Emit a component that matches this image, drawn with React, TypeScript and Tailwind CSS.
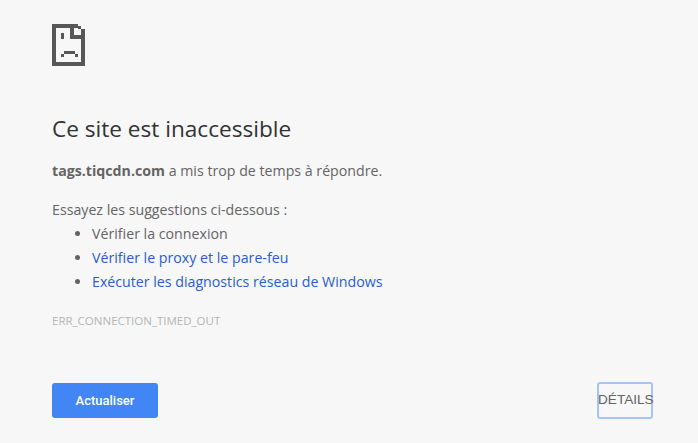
const links = ["Vérifier le proxy et le pare-feu", "Exécuter les diagnostics réseau de Windows"];

function SadPage() {
  return (
    <svg width="33" height="42" viewBox="0 0 33 42" shapeRendering="crispEdges" fill="#575757">
      <path d="M0 0h26v4H4v34h25V5h4v37H0z" />
      <path d="M18 4h4v7h7v4H18z" />
      <path d="M26 2h3v3h-3z" />
      <path d="M9 9h3v6H9z" />
      <path d="M12 27h11v3H12zM9 30h3v3H9zM23 30h3v3h-3z" />
    </svg>
  );
}

export default function App() {
  return (
    <div className="flex h-[443px] w-[698px] flex-col overflow-hidden bg-[#f7f7f7] pl-[52px] pr-[45px] pt-6 font-['Open_Sans','Noto_Sans',sans-serif] text-[14.2px] text-[#646464]">
      <SadPage />
      <h1 className="mt-[47px] text-[22.6px] leading-[32px] text-[#333333]">Ce site est inaccessible</h1>
      <p className="mt-[14px] leading-6">
        <strong className="font-bold">tags.tiqcdn.com</strong> a mis trop de temps à répondre.
      </p>
      <p className="mt-[15px] leading-6">Essayez les suggestions ci-dessous :</p>
      <ul className="list-disc pl-10 leading-6">
        <li>Vérifier la connexion</li>
        {links.map((label) => (
          <li key={label}>
            <a href="#" className="text-[#2a5cd0]">{label}</a>
          </li>
        ))}
      </ul>
      <div className="mt-[17px] text-[11.5px] leading-5 text-[#b5b5b5]">ERR_CONNECTION_TIMED_OUT</div>
      <div className="mt-[51px] flex items-center justify-between font-['Liberation_Sans',sans-serif]">
        <button className="h-[35px] w-[106px] rounded-[3px] bg-[#4285f4] font-['Roboto',sans-serif] text-[13px] font-medium text-white">Actualiser</button>
        <button className="h-[37px] w-14 whitespace-nowrap rounded-[3px] border-2 border-[#a4c4fb] text-left indent-[-1px] text-[13.6px] text-[#646464]">DÉTAILS</button>
      </div>
    </div>
  );
}
